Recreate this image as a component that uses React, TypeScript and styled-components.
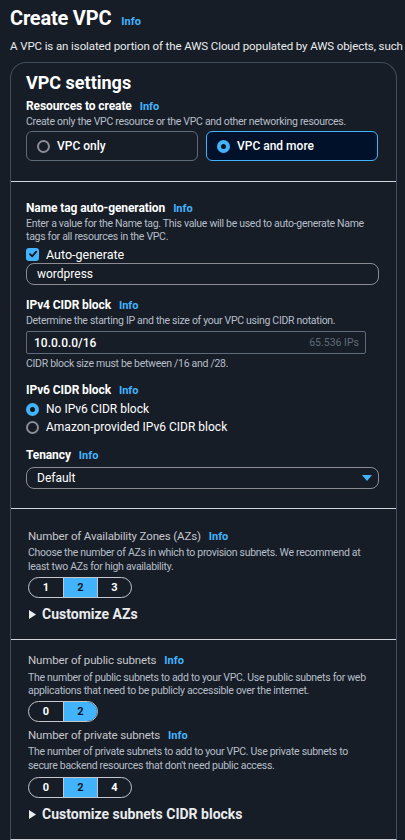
import React from "react";
import styled, { createGlobalStyle } from "styled-components";

const GlobalStyle = createGlobalStyle`
  html, body { margin: 0; padding: 0; background: #161d26; overflow: hidden; }
  body { font-family: Roboto, "Liberation Sans", sans-serif; color: #e9ebed; }
  * { box-sizing: border-box; }
`;

const Page = styled.div`
  padding: 4px 0 0 10px;
  width: 405px;
`;

const Header = styled.div`
  display: flex;
  align-items: baseline;
  gap: 10px;
  height: 28px;
`;

const Title = styled.h1`
  margin: 0;
  font-size: 20px;
  font-weight: 700;
  line-height: 28px;
  color: #ffffff;
  letter-spacing: -0.2px;
`;

const Info = styled.span`
  font-size: 11px;
  font-weight: 700;
  color: #42b4ff;
  margin-left: 8px;
  letter-spacing: 0;
`;

const TitleInfo = styled(Info)`
  margin-left: 0;
`;

const Lead = styled.p`
  margin: 6px 0 0;
  font-size: 11.5px;
  line-height: 16px;
  color: #e9ebed;
  white-space: nowrap;
  letter-spacing: -0.1px;
`;

const Card = styled.div`
  margin-top: 8px;
  width: 387px;
  border: 1px solid #414d5c;
  border-bottom: 1px solid #d1d5db;
  border-radius: 16px 16px 0 0;
`;

const Section = styled.div<{ $pt: number; $pb: number; $pl?: number; $divider?: boolean }>`
  padding: ${(p) => p.$pt}px 16px ${(p) => p.$pb}px ${(p) => p.$pl ?? 15}px;
  border-top: ${(p) => (p.$divider ? "1px solid #d1d5db" : "none")};
  display: flex;
  flex-direction: column;
`;

const Heading = styled.h2`
  margin: 0;
  font-size: 18px;
  font-weight: 700;
  line-height: 24px;
  color: #ffffff;
`;

const Label = styled.div<{ $mt?: number; $light?: boolean }>`
  margin-top: ${(p) => p.$mt ?? 0}px;
  font-size: ${(p) => (p.$light ? 11.5 : 12)}px;
  letter-spacing: ${(p) => (p.$light ? -0.15 : -0.1)}px;
  line-height: 16px;
  font-weight: ${(p) => (p.$light ? 400 : 700)};
  color: ${(p) => (p.$light ? "#c6c6cd" : "#ffffff")};
`;

const Desc = styled.div<{ $mt?: number; $lh?: number; $w?: number }>`
  margin-top: ${(p) => p.$mt ?? 0}px;
  font-size: 10.5px;
  letter-spacing: -0.3px;
  line-height: ${(p) => p.$lh ?? 13}px;
  color: #b6bec9;
  max-width: ${(p) => p.$w ?? 350}px;
`;

const Tiles = styled.div`
  margin-top: 2px;
  display: grid;
  grid-template-columns: 172px 172px;
  gap: 8px;
`;

const Tile = styled.div<{ $selected?: boolean }>`
  height: 30px;
  border-radius: 6px;
  border: 1px solid ${(p) => (p.$selected ? "#42b4ff" : "#5f6b7a")};
  background: ${(p) => (p.$selected ? "#001129" : "transparent")};
  display: flex;
  align-items: center;
  gap: 7px;
  padding-left: 10px;
  font-size: 12px;
  font-weight: 500;
  color: #ffffff;
`;

const Radio = styled.span<{ $checked?: boolean }>`
  width: 13px;
  height: 13px;
  border-radius: 50%;
  flex: none;
  border: ${(p) => (p.$checked ? "4px solid #42b4ff" : "2px solid #8c8c94")};
  background: ${(p) => (p.$checked ? "#0f141a" : "transparent")};
`;

const RadioRow = styled.div<{ $mt?: number }>`
  margin-top: ${(p) => p.$mt ?? 0}px;
  height: 18px;
  display: flex;
  align-items: center;
  gap: 7px;
  font-size: 12px;
  color: #ffffff;
`;

const CheckRow = styled(RadioRow)`
  font-size: 12.5px;
`;

const Check = styled.span`
  width: 13px;
  height: 13px;
  border-radius: 3px;
  background: #42b4ff;
  display: flex;
  align-items: center;
  justify-content: center;
  flex: none;
`;

const Input = styled.div<{ $w: number; $square?: boolean; $mt?: number }>`
  margin-top: ${(p) => p.$mt ?? 0}px;
  width: ${(p) => p.$w}px;
  height: ${(p) => (p.$square ? 23 : 22)}px;
  border: 1px solid ${(p) => (p.$square ? "#5f6b7a" : "#8c8c94")};
  border-radius: ${(p) => (p.$square ? 2 : 8)}px;
  display: flex;
  align-items: center;
  justify-content: space-between;
  padding: 0 6px 0 ${(p) => (p.$square ? 7 : 10)}px;
  font-size: 12px;
  color: #e9ebed;
`;

const Strong = styled.span`
  font-weight: 500;
  color: #ffffff;
`;

const Suffix = styled.span`
  font-size: 10.5px;
  color: #5f6b7a;
`;

const Segmented = styled.div<{ $mt: number }>`
  margin-top: ${(p) => p.$mt}px;
  display: inline-flex;
  align-self: flex-start;
  height: 21px;
  border: 1px solid #c6c6cd;
  border-radius: 11px;
  overflow: hidden;
`;

const Seg = styled.div<{ $active?: boolean }>`
  width: 34px;
  display: flex;
  align-items: center;
  justify-content: center;
  font-size: 11px;
  font-weight: 700;
  color: ${(p) => (p.$active ? "#0f141a" : "#ffffff")};
  background: ${(p) => (p.$active ? "#42b4ff" : "transparent")};
  & + & { border-left: 1px solid #c6c6cd; }
`;

const Expander = styled.div<{ $mt: number }>`
  margin-top: ${(p) => p.$mt}px;
  margin-left: 1px;
  height: 20px;
  display: flex;
  align-items: center;
  gap: 6px;
  font-size: 14px;
  font-weight: 700;
  color: #e9ebed;
`;

const Caret = () => (
  <svg width="7" height="9" viewBox="0 0 7 9">
    <path d="M0 0 L7 4.5 L0 9 Z" fill="#e9ebed" />
  </svg>
);

const Tick = () => (
  <svg width="10" height="10" viewBox="0 0 10 10">
    <path d="M2 5.2 L4.2 7.4 L8.2 2.6" stroke="#0f141a" strokeWidth="1.8" fill="none" strokeLinecap="round" strokeLinejoin="round" />
  </svg>
);

const DownCaret = () => (
  <svg width="10" height="8" viewBox="0 0 10 8">
    <path d="M0 1 L10 1 L5 7 Z" fill="#42b4ff" />
  </svg>
);

const Plain = styled.span`
  font-weight: 400;
  color: #ffffff;
`;

export default function App() {
  return (
    <Page>
      <GlobalStyle />
      <Header>
        <Title>Create VPC</Title>
        <TitleInfo>Info</TitleInfo>
      </Header>
      <Lead>A VPC is an isolated portion of the AWS Cloud populated by AWS objects, such as Amazon EC2 instances.</Lead>
      <Card>
        <Section $pt={8} $pb={20}>
          <Heading>VPC settings</Heading>
          <Label $mt={3}>Resources to create<Info>Info</Info></Label>
          <Desc $lh={14}>Create only the VPC resource or the VPC and other networking resources.</Desc>
          <Tiles>
            <Tile><Radio />VPC only</Tile>
            <Tile $selected><Radio $checked />VPC and more</Tile>
          </Tiles>
        </Section>
        <Section $divider $pt={18} $pb={19}>
          <Label>Name tag auto-generation<Info>Info</Info></Label>
          <Desc>Enter a value for the Name tag. This value will be used to auto-generate Name tags for all resources in the VPC.</Desc>
          <CheckRow $mt={2}><Check><Tick /></Check>Auto-generate</CheckRow>
          <Input $w={353}><Plain>wordpress</Plain></Input>
          <Label $mt={12}>IPv4 CIDR block<Info>Info</Info></Label>
          <Desc>Determine the starting IP and the size of your VPC using CIDR notation.</Desc>
          <Input $w={340} $square $mt={4}><Strong>10.0.0.0/16</Strong><Suffix>65.536 IPs</Suffix></Input>
          <Desc $mt={3} $lh={14}>CIDR block size must be between /16 and /28.</Desc>
          <Label $mt={11}>IPv6 CIDR block<Info>Info</Info></Label>
          <RadioRow $mt={1}><Radio $checked />No IPv6 CIDR block</RadioRow>
          <RadioRow><Radio />Amazon-provided IPv6 CIDR block</RadioRow>
          <Label $mt={11}>Tenancy<Info>Info</Info></Label>
          <Input $w={353} $mt={3}><Plain>Default</Plain><DownCaret /></Input>
        </Section>
        <Section $divider $pt={19} $pb={15} $pl={17}>
          <Label $light>Number of Availability Zones (AZs)<Info>Info</Info></Label>
          <Desc $lh={14} $mt={1} $w={340}>Choose the number of AZs in which to provision subnets. We recommend at least two AZs for high availability.</Desc>
          <Segmented $mt={3}>
            <Seg>1</Seg><Seg $active>2</Seg><Seg>3</Seg>
          </Segmented>
          <Expander $mt={6}><Caret />Customize AZs</Expander>
        </Section>
        <Section $divider $pt={12} $pb={15} $pl={17}>
          <Label $light>Number of public subnets<Info>Info</Info></Label>
          <Desc $mt={2} $w={345}>The number of public subnets to add to your VPC. Use public subnets for web applications that need to be publicly accessible over the internet.</Desc>
          <Segmented $mt={4}>
            <Seg>0</Seg><Seg $active>2</Seg>
          </Segmented>
          <Label $light $mt={5}>Number of private subnets<Info>Info</Info></Label>
          <Desc $lh={14} $mt={1} $w={330}>The number of private subnets to add to your VPC. Use private subnets to secure backend resources that don't need public access.</Desc>
          <Segmented $mt={4}>
            <Seg>0</Seg><Seg $active>2</Seg><Seg>4</Seg>
          </Segmented>
          <Expander $mt={6}><Caret />Customize subnets CIDR blocks</Expander>
        </Section>
      </Card>
    </Page>
  );
}
